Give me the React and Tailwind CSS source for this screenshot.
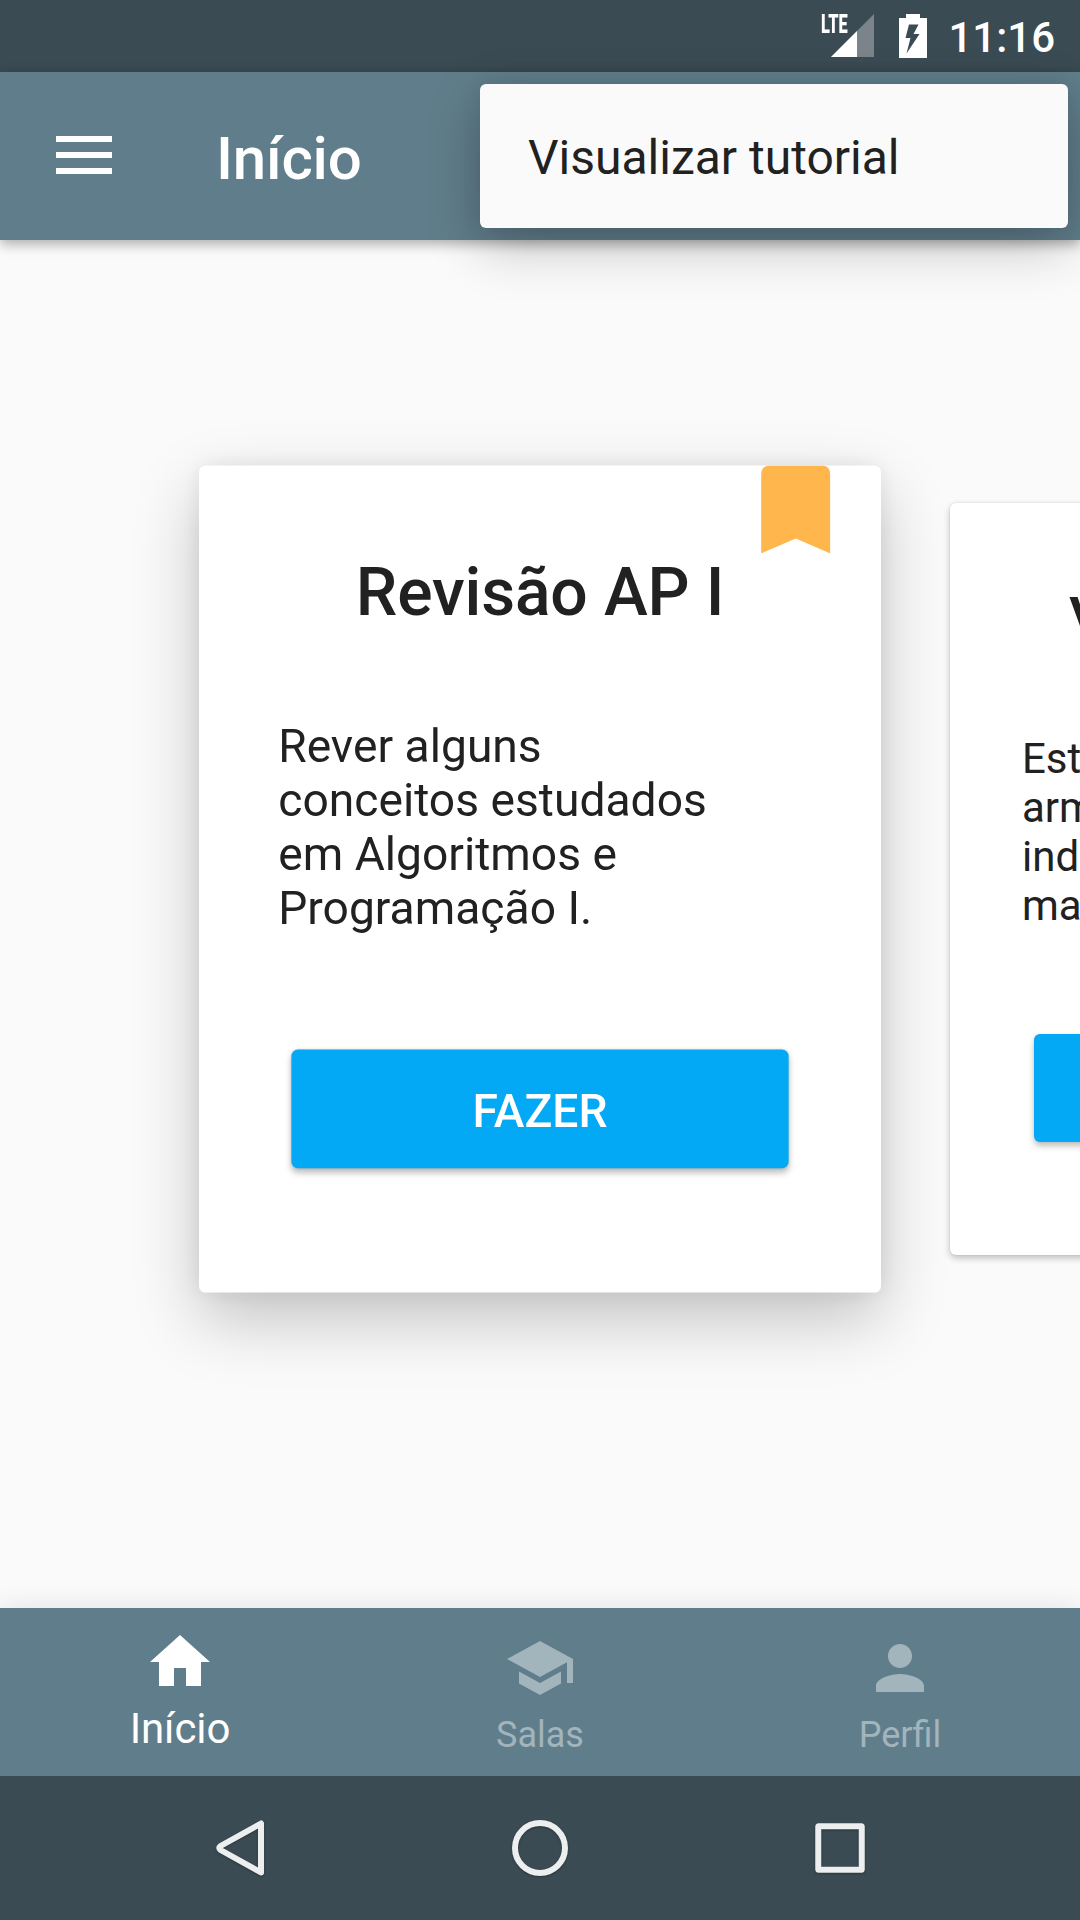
import React from "react";

function StatusBar() {
  return (
    <div className="flex h-[72px] shrink-0 items-start justify-end bg-[#3b4b53] pr-[25px] text-white">
      <div className="relative mt-[14px] h-[43px] w-[53px]">
        <span className="absolute left-0 top-[-3px] origin-left scale-x-[0.63] text-[26px] font-black leading-[26px]">LTE</span>
        <svg className="absolute right-0 top-0" width="43" height="43" viewBox="0 0 43 43">
          <path d="M43 0V43H0z" fill="#fff" fillOpacity="0.32" />
          <path d="M26 17V43H0z" fill="#fff" />
        </svg>
      </div>
      <svg className="ml-[25px] mt-[14px]" width="28" height="44" viewBox="0 0 28 44">
        <path
          fillRule="evenodd"
          fill="#fff"
          d="M7 0H21V4H28V44H0V4H7zM10 10.500L6.500 24H11.500L7.500 39.500L20.500 20H14.500L19.500 10.500z"
        />
      </svg>
      <span className="ml-[21px] mt-[13px] text-[42px] font-medium leading-[49px]">11:16</span>
    </div>
  );
}

function Toolbar() {
  return (
    <header className="relative z-10 flex h-[168px] shrink-0 items-start bg-[#607d8b] pl-14 text-white shadow-[0_4px_12px_rgba(0,0,0,0.32)]">
      <div className="mt-16 flex w-14 flex-col gap-[10px]">
        <div className="h-1.5 bg-white" />
        <div className="h-1.5 bg-white" />
        <div className="h-1.5 bg-white" />
      </div>
      <h1 className="ml-[104px] mt-[52px] text-[60px] font-medium leading-[70px] tracking-[-0.2px]">Início</h1>
      <div className="absolute left-[480px] top-3 z-20 flex h-36 w-[588px] items-center rounded-md bg-[#fafafa] pl-12 pt-[3px] text-5xl leading-[56px] text-[#212121] shadow-[0_18px_54px_rgba(0,0,0,0.24),0_0_20px_rgba(0,0,0,0.07)]">
        Visualizar tutorial
      </div>
    </header>
  );
}

function Card({ title, body, action, active }) {
  return (
    <article
      className={
        "relative flex h-[752px] w-[620px] shrink-0 flex-col rounded-md bg-white pt-[81px] text-[#212121] " +
        (active
          ? "scale-110 shadow-[0_24px_60px_rgba(0,0,0,0.22),0_0_20px_rgba(0,0,0,0.08)]"
          : "shadow-[0_3px_7px_rgba(0,0,0,0.24),0_0_2px_rgba(0,0,0,0.12)]")
      }
    >
      {active && (
        <svg className="absolute right-[46px] top-0" width="63" height="80" viewBox="0 0 63 80">
          <path d="M0 9Q0 0 8 0H55Q63 0 63 9V80L31.500 66.500L0 80z" fill="#ffb74d" />
        </svg>
      )}
      <h2 className={"whitespace-nowrap text-[60px] font-medium leading-[70px] tracking-[-0.15px] " + (active ? "text-center" : "pl-[119px]")}>{title}</h2>
      <p className="ml-[72px] mt-[80px] h-[196px] whitespace-pre text-[42px] leading-[49px]">{body}</p>
      <button className="ml-[84px] mt-[104px] h-[108px] w-[452px] rounded-md bg-[#03a9f4] pt-[3px] text-[42px] font-medium leading-[49px] text-white shadow-[0_4px_6px_rgba(0,0,0,0.25),0_0_2px_rgba(0,0,0,0.10)]">
        {action}
      </button>
    </article>
  );
}

function Tab({ label, path, selected }) {
  return (
    <div className={"flex flex-1 flex-col items-center " + (selected ? "pt-[18px] text-white" : "pt-6 text-[#a2b4bc]")}>
      <svg width="72" height="72" viewBox="0 0 24 24" fill="currentColor">
        <path d={path} />
      </svg>
      <span className={selected ? "mt-1.5 text-[42px] leading-[49px] tracking-[-0.1px]" : "mt-[10px] text-4xl leading-[42px]"}>{label}</span>
    </div>
  );
}

const HOME = "M10 20v-6h4v6h5v-8h3L12 3 2 12h3v8z";
const SCHOOL = "M5 13.180v4L12 21l7-3.820v-4L12 17l-7-3.820zM12 3L1 9l11 6 9-4.910V17h2V9L12 3z";
const PERSON =
  "M12 12c2.210 0 4-1.790 4-4s-1.790-4-4-4-4 1.790-4 4 1.790 4 4 4zm0 2c-2.670 0-8 1.340-8 4v2h16v-2c0-2.660-5.330-4-8-4z";

export default function App() {
  return (
    <div className="flex h-[1920px] w-[1080px] flex-col overflow-hidden bg-[#fafafa] font-['Roboto',sans-serif]">
      <StatusBar />
      <Toolbar />
      <main className="flex min-h-0 flex-1 items-start gap-[100px] overflow-hidden pl-[230px] pt-[263px]">
        <Card
          active
          title="Revisão AP I"
          body={"Rever alguns\nconceitos estudados\nem Algoritmos e\nProgramação I."}
          action="FAZER"
        />
        <Card title="V" body={"Est\narm\nind\nma"} action="" />
      </main>
      <nav className="relative flex h-[168px] shrink-0 bg-[#607d8b] shadow-[0_0_26px_rgba(0,0,0,0.1)]">
        <Tab label="Início" path={HOME} selected />
        <Tab label="Salas" path={SCHOOL} />
        <Tab label="Perfil" path={PERSON} />
      </nav>
      <div className="relative flex h-36 shrink-0 items-center justify-between bg-[#3b4b53] px-[204px]">
        <svg className="drop-shadow-[0_1px_1px_rgba(0,0,0,0.3)]" width="72" height="72" viewBox="0 0 72 72" fill="none" stroke="#eceeef" strokeWidth="6" strokeLinejoin="round">
          <path d="M57 11.500V60.500L16.500 38Q14 36 16.500 34z" />
        </svg>
        <svg className="drop-shadow-[0_1px_1px_rgba(0,0,0,0.3)]" width="72" height="72" viewBox="0 0 72 72" fill="none" stroke="#eceeef" strokeWidth="6">
          <circle cx="36" cy="36" r="25" />
        </svg>
        <svg className="drop-shadow-[0_1px_1px_rgba(0,0,0,0.3)]" width="72" height="72" viewBox="0 0 72 72" fill="none" stroke="#eceeef" strokeWidth="6" strokeLinejoin="round">
          <rect x="14.250" y="14.250" width="43.500" height="43.500" rx="0.500" />
        </svg>
      </div>
    </div>
  );
}
